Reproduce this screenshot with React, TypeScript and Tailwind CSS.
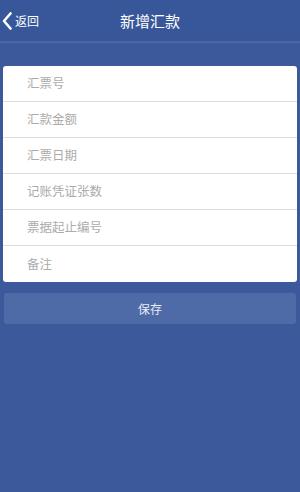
const fields = ["汇票号", "汇款金额", "汇票日期", "记账凭证张数", "票据起止编号", "备注"];

export default function App() {
  return (
    <div
      className="flex h-[492px] w-[300px] flex-col bg-[#3c5a9b]"
      style={{ fontFamily: '"Noto Sans CJK SC", "Noto Sans", sans-serif' }}
    >
      <header className="relative flex h-[41px] items-center justify-center bg-[#38579a]">
        <button type="button" className="absolute left-[2px] top-0 flex h-full items-center text-white">
          <svg width="10" height="18" viewBox="0 0 10 18" fill="none">
            <path d="M8.5 1.5 L2 9 L8.5 16.5" stroke="currentColor" strokeWidth="2.6" strokeLinecap="round" strokeLinejoin="round" />
          </svg>
          <span className="ml-[3px] text-[12px] leading-none">返回</span>
        </button>
        <h1 className="text-[15px] leading-none text-white">新增汇款</h1>
      </header>
      <div className="h-[2px] bg-[#4a67a7]" />

      <div className="mx-[3px] mt-[23px] overflow-hidden rounded-[3px] bg-white">
        {fields.map((label, i) => (
          <div
            key={label}
            className={`flex h-[36px] items-center pl-[24px] ${i < fields.length - 1 ? "border-b border-[#dcdcdc]" : ""}`}
          >
            <span className="text-[12.5px] text-[#ababab]">{label}</span>
          </div>
        ))}
      </div>

      <button
        type="button"
        className="mx-[4px] mt-[11px] flex h-[31px] items-center justify-center rounded-[3px] bg-[#4e6aa7] text-[12px] text-[#e8ecf5]"
      >
        保存
      </button>
    </div>
  );
}
